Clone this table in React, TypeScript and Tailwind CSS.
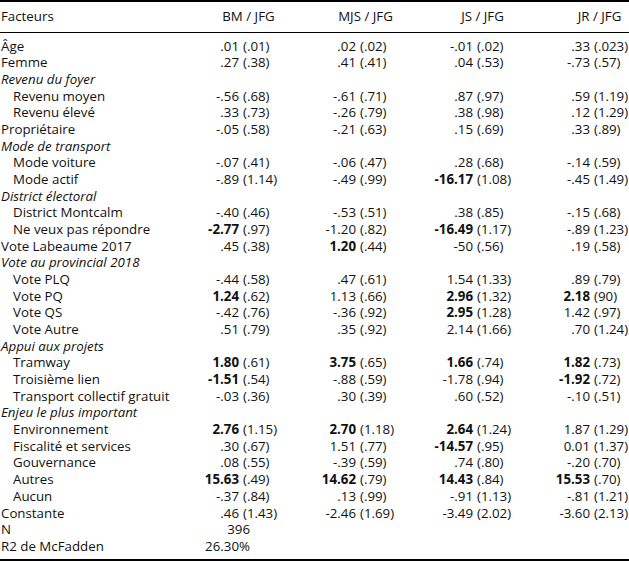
import React from "react"

type Cell = [string, string, boolean?]
type Row = {
  label: string
  kind?: "group" | "sub"
  cells?: Cell[]
  single?: string
}

const rows: Row[] = [
  { label: "Âge", cells: [[".01", "(.01)"], [".02", "(.02)"], ["-.01", "(.02)"], [".33", "(.023)"]] },
  { label: "Femme", cells: [[".27", "(.38)"], [".41", "(.41)"], [".04", "(.53)"], ["-.73", "(.57)"]] },
  { label: "Revenu du foyer", kind: "group" },
  { label: "Revenu moyen", kind: "sub", cells: [["-.56", "(.68)"], ["-.61", "(.71)"], [".87", "(.97)"], [".59", "(1.19)"]] },
  { label: "Revenu élevé", kind: "sub", cells: [[".33", "(.73)"], ["-.26", "(.79)"], [".38", "(.98)"], [".12", "(1.29)"]] },
  { label: "Propriétaire", cells: [["-.05", "(.58)"], ["-.21", "(.63)"], [".15", "(.69)"], [".33", "(.89)"]] },
  { label: "Mode de transport", kind: "group" },
  { label: "Mode voiture", kind: "sub", cells: [["-.07", "(.41)"], ["-.06", "(.47)"], [".28", "(.68)"], ["-.14", "(.59)"]] },
  { label: "Mode actif", kind: "sub", cells: [["-.89", "(1.14)"], ["-.49", "(.99)"], ["-16.17", "(1.08)", true], ["-.45", "(1.49)"]] },
  { label: "District électoral", kind: "group" },
  { label: "District Montcalm", kind: "sub", cells: [["-.40", "(.46)"], ["-.53", "(.51)"], [".38", "(.85)"], ["-.15", "(.68)"]] },
  { label: "Ne veux pas répondre", kind: "sub", cells: [["-2.77", "(.97)", true], ["-1.20", "(.82)"], ["-16.49", "(1.17)", true], ["-.89", "(1.23)"]] },
  { label: "Vote Labeaume 2017", cells: [[".45", "(.38)"], ["1.20", "(.44)", true], ["-50", "(.56)"], [".19", "(.58)"]] },
  { label: "Vote au provincial 2018", kind: "group" },
  { label: "Vote PLQ", kind: "sub", cells: [["-.44", "(.58)"], [".47", "(.61)"], ["1.54", "(1.33)"], [".89", "(.79)"]] },
  { label: "Vote PQ", kind: "sub", cells: [["1.24", "(.62)", true], ["1.13", "(.66)"], ["2.96", "(1.32)", true], ["2.18", "(90)", true]] },
  { label: "Vote QS", kind: "sub", cells: [["-.42", "(.76)"], ["-.36", "(.92)"], ["2.95", "(1.28)", true], ["1.42", "(.97)"]] },
  { label: "Vote Autre", kind: "sub", cells: [[".51", "(.79)"], [".35", "(.92)"], ["2.14", "(1.66)"], [".70", "(1.24)"]] },
  { label: "Appui aux projets", kind: "group" },
  { label: "Tramway", kind: "sub", cells: [["1.80", "(.61)", true], ["3.75", "(.65)", true], ["1.66", "(.74)", true], ["1.82", "(.73)", true]] },
  { label: "Troisième lien", kind: "sub", cells: [["-1.51", "(.54)", true], ["-.88", "(.59)"], ["-1.78", "(.94)"], ["-1.92", "(.72)", true]] },
  { label: "Transport collectif gratuit", kind: "sub", cells: [["-.03", "(.36)"], [".30", "(.39)"], [".60", "(.52)"], ["-.10", "(.51)"]] },
  { label: "Enjeu le plus important", kind: "group" },
  { label: "Environnement", kind: "sub", cells: [["2.76", "(1.15)", true], ["2.70", "(1.18)", true], ["2.64", "(1.24)", true], ["1.87", "(1.29)"]] },
  { label: "Fiscalité et services", kind: "sub", cells: [[".30", "(.67)"], ["1.51", "(.77)"], ["-14.57", "(.95)", true], ["0.01", "(1.37)"]] },
  { label: "Gouvernance", kind: "sub", cells: [[".08", "(.55)"], ["-.39", "(.59)"], [".74", "(.80)"], ["-.20", "(.70)"]] },
  { label: "Autres", kind: "sub", cells: [["15.63", "(.49)", true], ["14.62", "(.79)", true], ["14.43", "(.84)", true], ["15.53", "(.70)", true]] },
  { label: "Aucun", kind: "sub", cells: [["-.37", "(.84)"], [".13", "(.99)"], ["-.91", "(1.13)"], ["-.81", "(1.21)"]] },
  { label: "Constante", cells: [[".46", "(1.43)"], ["-2.46", "(1.69)"], ["-3.49", "(2.02)"], ["-3.60", "(2.13)"]] },
  { label: "N", single: "396" },
  { label: "R2 de McFadden", single: "26.30%" },
]

const headers = ["BM / JFG", "MJS / JFG", "JS / JFG", "JR / JFG"]

const gridCols = "grid grid-cols-[188px_55px_62px_55px_62px_55px_62px_55px_62px] w-[656px]"

export default function App() {
  return (
    <div className="w-[629px] h-[561px] bg-white text-[#111] overflow-hidden" style={{ fontFamily: "'Open Sans', 'Noto Sans', sans-serif" }}>
      <div className="border-t-2 border-b-2 border-black text-[13.3px]">
        <div className={`${gridCols} h-[30px] items-center`}>
          <div className="pl-[1px]">Facteurs</div>
          {headers.map((h) => (
            <div key={h} className="col-span-2 text-center pl-[4px]">
              {h}
            </div>
          ))}
        </div>
        <div className="h-px bg-black" />
        <div className={`${gridCols} py-[4.7px] leading-[16.67px]`}>
          {rows.map((r) => (
            <React.Fragment key={r.label}>
              <div
                className={
                  r.kind === "group"
                    ? "pl-[1px] italic col-span-9"
                    : r.kind === "sub"
                    ? "pl-[13px] whitespace-nowrap"
                    : "pl-[1px] whitespace-nowrap"
                }
              >
                {r.label}
              </div>
              {r.cells &&
                r.cells.map((c, i) => (
                  <React.Fragment key={i}>
                    <div className={`text-right pr-[4px] whitespace-nowrap ${c[2] ? "font-bold" : ""}`}>{c[0]}</div>
                    <div className="text-left whitespace-nowrap">{c[1]}</div>
                  </React.Fragment>
                ))}
              {r.single && (
                <>
                  <div className="col-span-2 text-right pr-[55px]">{r.single}</div>
                  <div className="col-span-6" />
                </>
              )}
            </React.Fragment>
          ))}
        </div>
      </div>
    </div>
  )
}
